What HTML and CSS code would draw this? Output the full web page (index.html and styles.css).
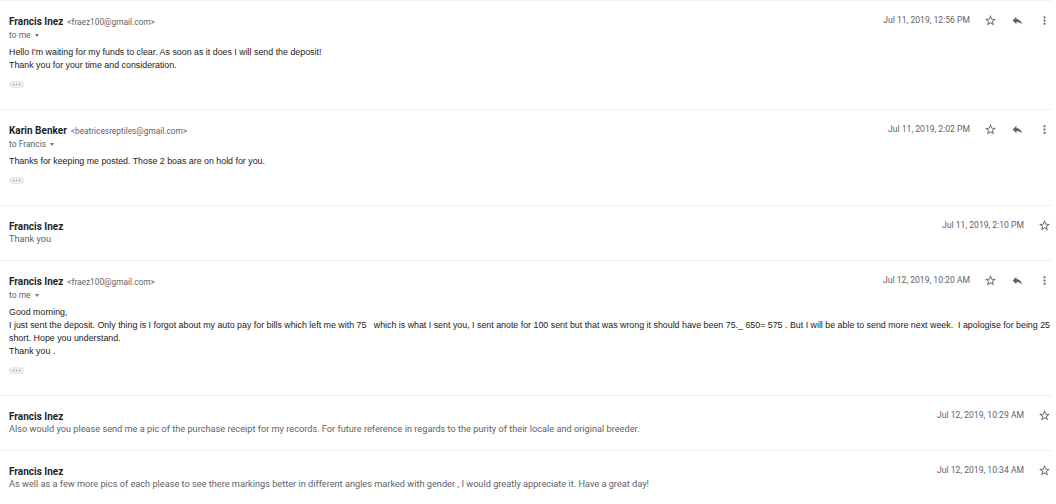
FILE: index.html
```html
<!DOCTYPE html>
<html>
<head>
<meta charset="utf-8">
<link rel="stylesheet" href="styles.css">
</head>
<body>
<svg width="0" height="0" class="defs">
  <defs>
    <symbol id="star" viewBox="0 0 24 24"><path d="M22 9.24l-7.19-.62L12 2 9.19 8.63 2 9.24l5.46 4.73L5.82 21 12 17.27 18.18 21l-1.63-7.03L22 9.24zM12 15.4l-3.76 2.27 1-4.28-3.32-2.88 4.38-.38L12 6.1l1.71 4.04 4.38.38-3.32 2.88 1 4.28L12 15.4z"/></symbol>
    <symbol id="reply" viewBox="0 0 24 24"><path d="M10 9V5l-7 7 7 7v-4.1c5 0 8.5 1.6 11 5.1-1-5-4-10-11-11z"/></symbol>
    <symbol id="more" viewBox="0 0 24 24"><path d="M12 8c1.1 0 2-.9 2-2s-.9-2-2-2-2 .9-2 2 .9 2 2 2zm0 2c-1.1 0-2 .9-2 2s.9 2 2 2 2-.9 2-2-.9-2-2-2zm0 6c-1.1 0-2 .9-2 2s.9 2 2 2 2-.9 2-2-.9-2-2-2z"/></symbol>
  </defs>
</svg>
<div class="thread">

  <div class="msg">
    <div class="head">
      <div class="who">
        <div class="from"><span class="name">Francis Inez</span> <span class="addr">&lt;fraez100@gmail.com&gt;</span></div>
        <div class="to">to me <span class="caret"></span></div>
      </div>
      <div class="meta">
        <span class="date">Jul 11, 2019, 12:56 PM</span>
        <span class="ibtn"><svg><use href="#star"/></svg></span>
        <span class="ibtn"><svg><use href="#reply"/></svg></span>
        <span class="ibtn"><svg><use href="#more"/></svg></span>
      </div>
    </div>
    <div class="body">Hello I'm waiting for my funds to clear. As soon as it does I will send the deposit!
Thank you for your time and consideration.</div>
    <div class="pill"><i></i><i></i><i></i></div>
  </div>

  <div class="msg">
    <div class="head">
      <div class="who">
        <div class="from"><span class="name">Karin Benker</span> <span class="addr">&lt;beatricesreptiles@gmail.com&gt;</span></div>
        <div class="to">to Francis <span class="caret"></span></div>
      </div>
      <div class="meta">
        <span class="date">Jul 11, 2019, 2:02 PM</span>
        <span class="ibtn"><svg><use href="#star"/></svg></span>
        <span class="ibtn"><svg><use href="#reply"/></svg></span>
        <span class="ibtn"><svg><use href="#more"/></svg></span>
      </div>
    </div>
    <div class="body">Thanks for keeping me posted. Those 2 boas are on hold for you.</div>
    <div class="pill"><i></i><i></i><i></i></div>
  </div>

  <div class="msg collapsed">
    <div class="head">
      <div class="who">
        <div class="from"><span class="name">Francis Inez</span></div>
        <div class="snippet">Thank you</div>
      </div>
      <div class="meta">
        <span class="date">Jul 11, 2019, 2:10 PM</span>
        <span class="ibtn"><svg><use href="#star"/></svg></span>
      </div>
    </div>
  </div>

  <div class="msg">
    <div class="head">
      <div class="who">
        <div class="from"><span class="name">Francis Inez</span> <span class="addr">&lt;fraez100@gmail.com&gt;</span></div>
        <div class="to">to me <span class="caret"></span></div>
      </div>
      <div class="meta">
        <span class="date">Jul 12, 2019, 10:20 AM</span>
        <span class="ibtn"><svg><use href="#star"/></svg></span>
        <span class="ibtn"><svg><use href="#reply"/></svg></span>
        <span class="ibtn"><svg><use href="#more"/></svg></span>
      </div>
    </div>
    <div class="body">Good morning,
I just sent the deposit. Only thing is I forgot about my auto pay for bills which left me with 75   which is what I sent you, I sent anote for 100 sent but that was wrong it should have been 75._ 650= 575 . But I will be able to send more next week.  I apologise for being 25 short. Hope you understand.
Thank you .</div>
    <div class="pill"><i></i><i></i><i></i></div>
  </div>

  <div class="msg collapsed">
    <div class="head">
      <div class="who">
        <div class="from"><span class="name">Francis Inez</span></div>
        <div class="snippet">Also would you please send me a pic of the purchase receipt for my records. For future reference in regards to the purity of their locale and original breeder.</div>
      </div>
      <div class="meta">
        <span class="date">Jul 12, 2019, 10:29 AM</span>
        <span class="ibtn"><svg><use href="#star"/></svg></span>
      </div>
    </div>
  </div>

  <div class="msg collapsed">
    <div class="head">
      <div class="who">
        <div class="from"><span class="name">Francis Inez</span></div>
        <div class="snippet">As well as a few more pics of each please to see there markings better in different angles marked with gender , I would greatly appreciate it. Have a great day!</div>
      </div>
      <div class="meta">
        <span class="date">Jul 12, 2019, 10:34 AM</span>
        <span class="ibtn"><svg><use href="#star"/></svg></span>
      </div>
    </div>
  </div>

</div>
</body>
</html>
```

FILE: styles.css
```css
html, body {
  margin: 0;
  padding: 0;
  background: #fff;
}
body {
  font-family: Roboto, "Liberation Sans", Arial, sans-serif;
  color: #222;
  overflow: hidden;
}
.defs {
  position: absolute;
  width: 0;
  height: 0;
}
.thread {
  width: 1052px;
}
.msg {
  border-top: 1px solid #efefef;
  padding: 13px 0 21px 9px;
}
.msg:first-child {
  border-top-color: #f3f3f3;
}
.msg.collapsed {
  padding-bottom: 15px;
}
.head {
  display: flex;
  align-items: flex-start;
  justify-content: space-between;
}
.who {
  min-width: 0;
}
.from {
  height: 12px;
  line-height: 12px;
  white-space: nowrap;
}
.name {
  font-weight: 700;
  font-size: 10px;
  color: #1f1f1f;
}
.addr {
  font-size: 8.3px;
  color: #5f6368;
}
.to {
  margin-top: 3px;
  height: 13px;
  line-height: 13px;
  font-size: 8.5px;
  color: #5f6368;
  display: flex;
  align-items: center;
  gap: 4px;
}
.caret {
  width: 0;
  height: 0;
  border-left: 2.5px solid transparent;
  border-right: 2.5px solid transparent;
  border-top: 3px solid #777;
}
.snippet {
  margin-top: 2px;
  height: 12px;
  line-height: 12px;
  font-size: 9.2px;
  color: #5f6368;
  white-space: nowrap;
}
.meta {
  display: flex;
  align-items: center;
  height: 12px;
  margin-right: -6px;
  flex-shrink: 0;
}
.date {
  font-size: 8.6px;
  color: #5f6368;
  margin-right: 7px;
  white-space: nowrap;
}
.ibtn {
  width: 27px;
  height: 12px;
  display: flex;
  align-items: center;
  justify-content: center;
}
.ibtn svg {
  width: 13px;
  height: 13px;
  fill: #5f6368;
}
.body {
  margin-top: 4px;
  font-family: "Liberation Sans", Arial, sans-serif;
  font-size: 8.85px;
  line-height: 13px;
  color: #222;
  white-space: pre-wrap;
  width: 1043px;
}
.pill {
  margin-top: 9px;
  width: 15px;
  height: 7px;
  border-radius: 4px;
  background: #e8eaed;
  display: flex;
  align-items: center;
  justify-content: center;
  gap: 1.5px;
}
.pill i {
  width: 1.6px;
  height: 1.6px;
  border-radius: 50%;
  background: #5f6368;
}
```
